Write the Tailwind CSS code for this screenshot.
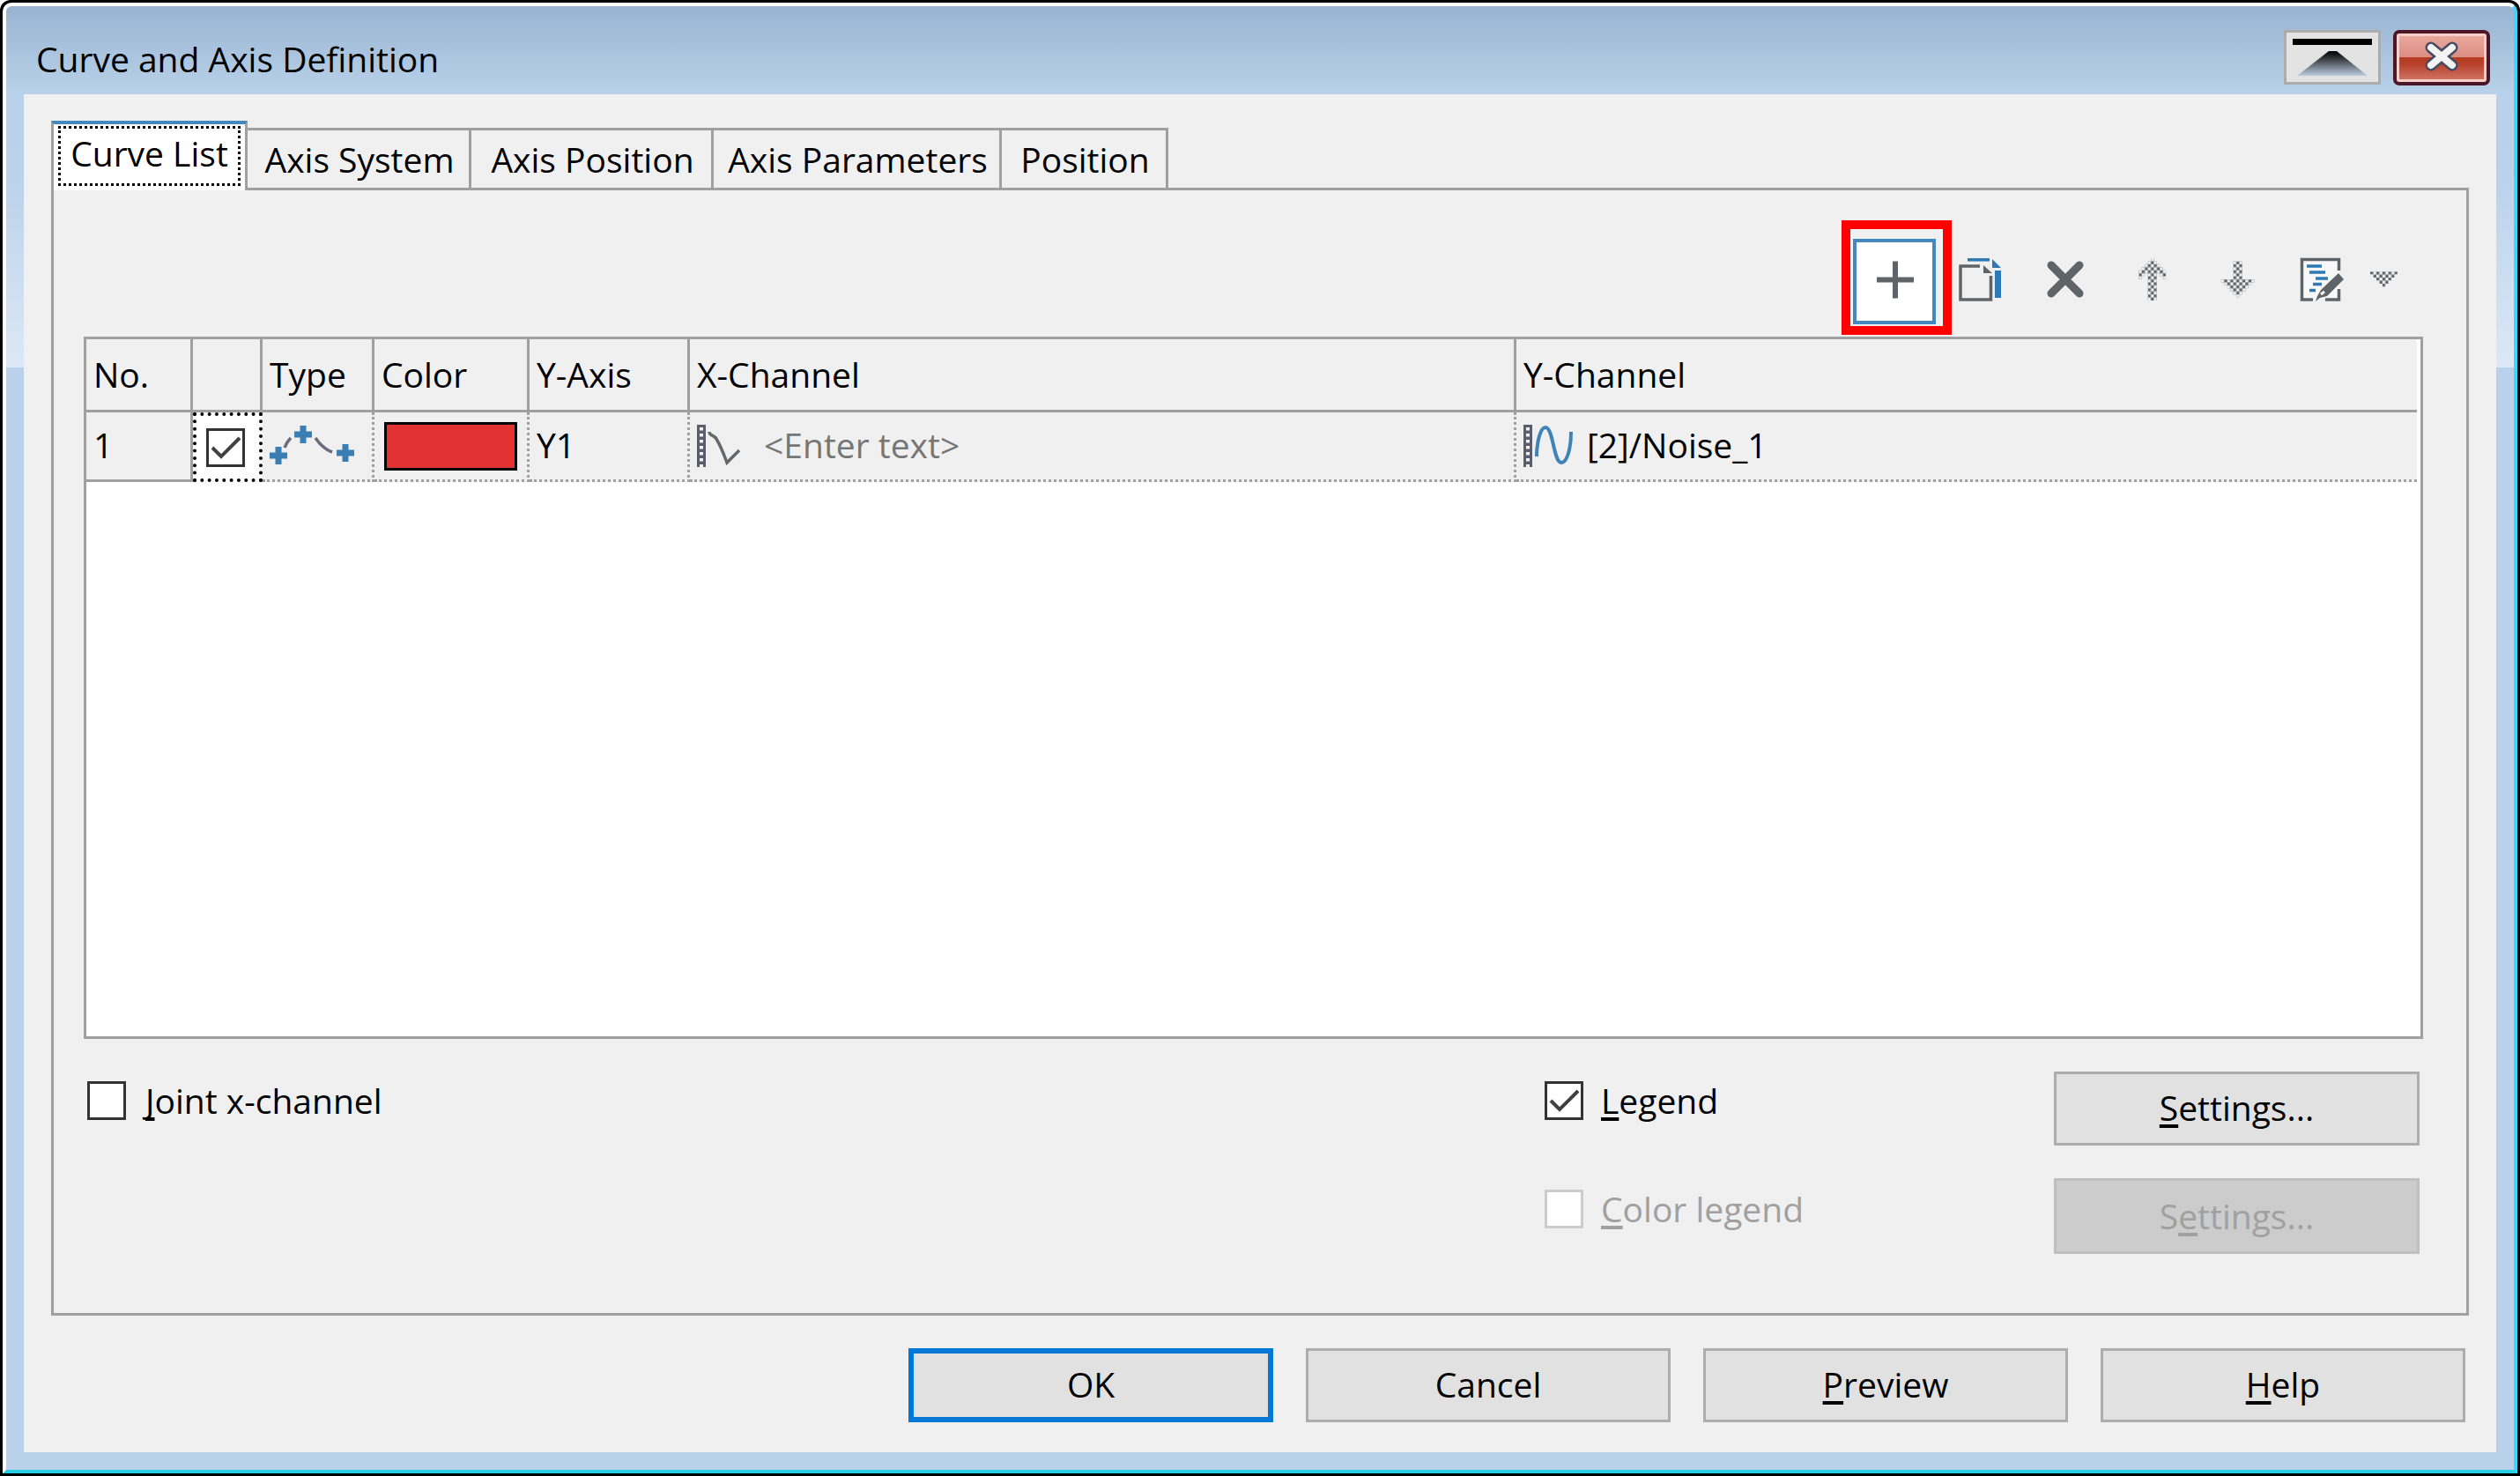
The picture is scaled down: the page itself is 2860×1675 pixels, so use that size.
<!DOCTYPE html>
<html lang="en">
  <head>
    <meta charset="UTF-8" />
    <meta name="viewport" content="width=device-width, initial-scale=1.0" />
    <title>Curve and Axis Definition</title>
    <script src="https://cdn.jsdelivr.net/npm/@tailwindcss/browser@4"></script>
  </head>
  <body class="bg-white font-['Open_Sans','Noto_Sans',sans-serif] text-[39px] leading-[44px] text-black">
    <div class="flex h-screen rounded-t-[12px] bg-black p-[3px]">
      <div class="flex flex-1 flex-col rounded-t-[10px] border-4 border-t-white border-l-white border-r-[#3fd6f8] border-b-[#27cfe3] bg-[linear-gradient(#99b4d1_0px,#b9d1ea_100px,#bbd2eb_200px,#dce8f5_410px,#b9d1ea_410px)] px-5 pb-5">
        <!-- title bar -->
        <header class="flex h-[100px] shrink-0 items-center gap-[14px] pt-[16px] pr-[7px] pl-[14px]">
          <h1 class="flex-1 pt-1">Curve and Axis Definition</h1>
          <button aria-label="Roll up" class="h-[62px] w-[110px] border-[3px] border-[#acacac] bg-[#e3e3e3]">
            <svg viewBox="0 0 104 56" class="h-full w-full">
              <defs>
                <linearGradient id="roll" x1="0" y1="0" x2="0" y2="1">
                  <stop offset="0" stop-color="#000" />
                  <stop offset="0.25" stop-color="#2b2e31" />
                  <stop offset="1" stop-color="#bccde0" />
                </linearGradient>
              </defs>
              <rect x="7" y="7" width="90" height="7" fill="#000" />
              <path d="M48 21H57L92 49H12Z" fill="url(#roll)" />
            </svg>
          </button>
          <button aria-label="Close" class="h-[63px] w-[110px] rounded-[7px] border-4 border-[#4c1626] bg-[#f6cfc8] p-[3px]">
            <span class="flex h-full w-full items-center justify-center bg-[linear-gradient(#eaa79d,#dc8e83_48%,#b63b21_50%,#b8412a_65%,#d07263)]">
              <svg viewBox="0 0 40 34" class="mb-[3px] h-[34px] w-[40px]" fill="none" stroke-linecap="round">
                <path d="M8 7L32 27M32 7L8 27" stroke="#454b60" stroke-width="13" />
                <path d="M8 7L32 27M32 7L8 27" stroke="#f4f4f4" stroke-width="8" />
              </svg>
            </span>
          </button>
        </header>

        <main class="flex flex-1 flex-col bg-[#f0f0f0] px-[31px] pt-[30px] pb-[34px]">
          <!-- tabs -->
          <div role="tablist" class="relative z-10 -mb-[3px] flex h-[79px] items-end">
            <button role="tab" aria-selected="true" class="h-full w-[223px] border-x-[3px] border-t-4 border-x-[#a0a0a0] border-t-[#4389bf] bg-white px-[5px] pt-[2px] pb-[5px]">
              <span class="flex h-full items-center justify-center border-[3px] border-dotted border-black pb-[6px]">Curve List</span>
            </button>
            <button role="tab" class="h-[71px] w-[254px] border-y-[3px] border-r-[3px] border-[#a0a0a0] pl-[3px]">Axis System</button>
            <button role="tab" class="h-[71px] w-[275px] border-y-[3px] border-r-[3px] border-[#a0a0a0] pl-[3px]">Axis Position</button>
            <button role="tab" class="h-[71px] w-[327px] border-y-[3px] border-r-[3px] border-[#a0a0a0] pl-[3px]">Axis Parameters</button>
            <button role="tab" class="h-[71px] w-[189px] border-y-[3px] border-r-[3px] border-[#a0a0a0] pl-[3px]">Position</button>
          </div>

          <section role="tabpanel" class="flex flex-1 flex-col border-[3px] border-[#a0a0a0] pt-[55px] pr-[49px] pb-[67px] pl-[34px]">
            <!-- toolbar -->
            <div role="toolbar" class="mr-[25px] mb-[14px] flex h-[97px] justify-end gap-[3px]">
              <div class="relative">
                <button aria-label="Add curve" class="flex h-full w-[94px] items-center justify-center border-4 border-[#4389bf] bg-white">
                  <svg viewBox="0 0 50 50" class="mb-[6px] size-[50px]">
                    <path d="M5 25.500H47M26 4.500V46.500" stroke="#5f6468" stroke-width="6" />
                  </svg>
                </button>
                <div class="pointer-events-none absolute -top-[21px] -right-[18px] -bottom-[12px] -left-[13px] border-10 border-[#ff0000]"></div>
              </div>
              <button aria-label="Copy" class="flex w-[94px] items-center justify-center pb-[6px]">
                <svg viewBox="0 0 50 50" class="size-[50px]" fill="none" stroke-width="3.500">
                  <path d="M25 10H3V48H37.500V21" stroke="#5f6468" />
                  <path d="M29 9L39 18H29Z" fill="#5f6468" />
                  <path d="M11 2.800H36" stroke="#2c79b5" />
                  <path d="M39 2L49 12H39Z" fill="#2c79b5" />
                  <path d="M45.500 15V46" stroke="#2c79b5" stroke-width="7" />
                </svg>
              </button>
              <button aria-label="Delete" class="flex w-[94px] items-center justify-center pb-[6px]">
                <svg viewBox="0 0 50 50" class="size-[50px]">
                  <path d="M9 9L41 41M41 9L9 41" stroke="#5f6468" stroke-width="9" stroke-linecap="round" />
                </svg>
              </button>
              <button aria-label="Move up" class="flex w-[94px] items-center justify-center pb-[6px]">
                <svg viewBox="0 0 14 14" class="size-[48px]">
                  <defs>
                    <pattern id="hatch" width="2" height="2" patternUnits="userSpaceOnUse">
                      <rect width="1" height="1" fill="#5f6468" />
                      <rect x="1" y="1" width="1" height="1" fill="#5f6468" />
                    </pattern>
                  </defs>
                  <path d="M7 0H8V1H9V2H10V3H11V4H12V7H11V6H10V5H9V14H6V5H5V6H4V7H3V4H4V3H5V2H6V1H7Z" fill="url(#hatch)" />
                </svg>
              </button>
              <button aria-label="Move down" class="flex w-[94px] items-center justify-center pb-[6px]">
                <svg viewBox="0 0 14 14" class="size-[48px]">
                  <path d="M6 1H9V7H13V8H12V9H11V10H10V11H9V12H8V13H7V12H6V11H5V10H4V9H3V8H2V7H6Z" fill="url(#hatch)" />
                </svg>
              </button>
              <button aria-label="Edit" class="flex w-[94px] items-center justify-center pb-[6px]">
                <svg viewBox="0 0 50 50" class="size-[50px]" fill="none">
                  <path d="M3 3H45V47H3Z" fill="#f8f8f8" />
                  <path d="M15 48H2.500V2.500H44.500V15M44.500 36V48H29" stroke="#5f6468" stroke-width="3.500" />
                  <path d="M8 10H25M11 17H29M18 24H32M15 30.500H25M11 37.500H18" stroke="#2c79b5" stroke-width="3.500" />
                  <path d="M44 18L50 25L31 44L23 46L18 50L20 44L24 37Z" fill="#5f6468" />
                  <path d="M24 42L28 39" stroke="#f8f8f8" stroke-width="3" />
                </svg>
              </button>
              <button aria-label="More" class="flex w-[40px] items-center justify-center pb-[2px]">
                <svg viewBox="0 0 9 6" class="h-[21px] w-[31px]">
                  <path d="M0 0H9V1H8V2H7V3H6V4H5V5H4V4H3V3H2V2H1V1H0Z" fill="url(#hatch)" />
                </svg>
              </button>
            </div>

            <!-- curve list -->
            <div class="flex-1 border-[3px] border-[#a0a0a0] bg-white pr-1">
              <table class="w-full table-fixed border-separate border-spacing-0 bg-[#f0f0f0] text-left">
                <thead>
                  <tr class="h-[83px]">
                    <th class="w-[121px] border-r-[3px] border-b-[3px] border-[#a0a0a0] pl-[8px] font-normal">No.</th>
                    <th class="w-[79px] border-r-[3px] border-b-[3px] border-[#a0a0a0]"></th>
                    <th class="w-[127px] border-r-[3px] border-b-[3px] border-[#a0a0a0] pl-[8px] font-normal">Type</th>
                    <th class="w-[176px] border-r-[3px] border-b-[3px] border-[#a0a0a0] pl-[8px] font-normal">Color</th>
                    <th class="w-[182px] border-r-[3px] border-b-[3px] border-[#a0a0a0] pl-[8px] font-normal">Y-Axis</th>
                    <th class="w-[938px] border-r-[3px] border-b-[3px] border-[#a0a0a0] pl-[8px] font-normal">X-Channel</th>
                    <th class="border-b-[3px] border-[#a0a0a0] pl-[8px] font-normal">Y-Channel</th>
                  </tr>
                </thead>
                <tbody>
                  <tr class="h-[79px]">
                    <td class="border-r-[3px] border-b-[3px] border-[#a0a0a0] pb-[2px] pl-[8px]">1</td>
                    <td class="border-4 border-dotted border-black bg-white">
                      <div class="relative ml-[11px] size-[44px]">
                        <input type="checkbox" checked aria-label="Show curve 1" class="peer block size-full appearance-none border-[3px] border-[#333333] bg-white" />
                        <svg viewBox="0 0 44 44" class="pointer-events-none absolute inset-0 hidden peer-checked:block" fill="none">
                          <path d="M7 22L17 32L38 11" stroke="#404040" stroke-width="4" />
                        </svg>
                      </div>
                    </td>
                    <td class="border-r-[3px] border-b-[3px] border-dotted border-[#a0a0a0] pl-[8px]">
                      <svg viewBox="0 0 98 48" class="h-[48px] w-[98px]" fill="none">
                        <path d="M17 26Q19 20 24 15M52 15Q60 27 71 31" stroke="#6b6b7d" stroke-width="3.500" />
                        <path d="M0 35H20M10 25V45M28 11H48M38 1V21M76 32H96M86 22V42" stroke="#3a7eb3" stroke-width="7" />
                      </svg>
                    </td>
                    <td class="border-r-[3px] border-b-[3px] border-dotted border-[#a0a0a0] px-[11px]">
                      <button aria-label="Curve color" class="block h-[55px] w-full border-[3px] border-black bg-[#e23232]"></button>
                    </td>
                    <td class="border-r-[3px] border-b-[3px] border-dotted border-[#a0a0a0] pb-[2px] pl-[8px]">Y1</td>
                    <td class="border-r-[3px] border-b-[3px] border-dotted border-[#a0a0a0] pl-[8px]">
                      <div class="flex items-center gap-[20px]">
                        <svg viewBox="0 0 56 48" class="h-[48px] w-[56px] shrink-0" fill="none">
                          <path d="M0 0H10V48H0Z" fill="#5c5c6c" />
                          <path d="M5 3V48" stroke="#f0f0f0" stroke-width="4" stroke-dasharray="3.500 3.500" />
                          <path d="M14 8C14 13 19 11 22 16C28 26 31 35 34 43L48 29" stroke="#63686d" stroke-width="3.500" />
                        </svg>
                        <input type="text" aria-label="X-Channel" placeholder="&lt;Enter text&gt;" class="min-w-0 flex-1 bg-transparent pb-[2px] placeholder:text-[#767676]" />
                      </div>
                    </td>
                    <td class="border-b-[3px] border-dotted border-[#a0a0a0] pl-[8px]">
                      <div class="flex items-center gap-[16px]">
                        <svg viewBox="0 0 56 48" class="h-[48px] w-[56px] shrink-0" fill="none">
                          <path d="M0 0H10V48H0Z" fill="#5c5c6c" />
                          <path d="M5 3V48" stroke="#f0f0f0" stroke-width="4" stroke-dasharray="3.500 3.500" />
                          <path d="M15 36C15 17 20 3 25 3C34 3 34 43 43 43C49 43 54 28 54 8" stroke="#3f84b8" stroke-width="4" />
                        </svg>
                        <input type="text" aria-label="Y-Channel" value="[2]/Noise_1" class="min-w-0 flex-1 bg-transparent pb-[2px]" />
                      </div>
                    </td>
                  </tr>
                </tbody>
              </table>
            </div>

            <!-- options -->
            <div class="mt-[37px] ml-1 mr-1 grid grid-cols-[1fr_578px_415px] items-start gap-y-[37px]">
              <label class="mt-[11px] flex items-center gap-[22px]">
                <input type="checkbox" class="size-[44px] appearance-none border-[3px] border-[#333333] bg-white" />
                <span><span class="underline decoration-4 underline-offset-4 [text-decoration-skip-ink:none]">J</span>oint x-channel</span>
              </label>
              <label class="mt-[11px] flex items-center gap-[20px]">
                <span class="relative size-[44px]">
                  <input type="checkbox" checked class="peer block size-full appearance-none border-[3px] border-[#333333] bg-white" />
                  <svg viewBox="0 0 44 44" class="pointer-events-none absolute inset-0 hidden peer-checked:block" fill="none">
                    <path d="M7 22L17 32L38 11" stroke="#404040" stroke-width="4" />
                  </svg>
                </span>
                <span><span class="underline decoration-4 underline-offset-4 [text-decoration-skip-ink:none]">L</span>egend</span>
              </label>
              <button class="h-[84px] border-[3px] border-[#adadad] bg-[#e1e1e1] pb-[2px]"><span class="underline decoration-4 underline-offset-4 [text-decoration-skip-ink:none]">S</span>ettings...</button>
              <label class="col-start-2 mt-[13px] flex items-center gap-[20px] text-[#a0a0a0]">
                <input type="checkbox" disabled class="size-[44px] appearance-none border-[3px] border-[#cccccc] bg-white" />
                <span><span class="underline decoration-4 underline-offset-4 [text-decoration-skip-ink:none]">C</span>olor legend</span>
              </label>
              <button disabled class="h-[86px] border-[3px] border-[#bfbfbf] bg-[#cccccc] text-[#a0a0a0]">S<span class="underline decoration-4 underline-offset-4 [text-decoration-skip-ink:none]">e</span>ttings...</button>
            </div>
          </section>

          <!-- dialog buttons -->
          <footer class="mt-[37px] mr-1 flex justify-end gap-[37px]">
            <button class="h-[84px] w-[414px] border-[6px] border-[#0078d7] bg-[#e1e1e1] pb-[2px]">OK</button>
            <button class="h-[84px] w-[414px] border-[3px] border-[#adadad] bg-[#e1e1e1] pb-[2px]">Cancel</button>
            <button class="h-[84px] w-[414px] border-[3px] border-[#adadad] bg-[#e1e1e1] pb-[2px]"><span class="underline decoration-4 underline-offset-4 [text-decoration-skip-ink:none]">P</span>review</button>
            <button class="h-[84px] w-[414px] border-[3px] border-[#adadad] bg-[#e1e1e1] pb-[2px]"><span class="underline decoration-4 underline-offset-4 [text-decoration-skip-ink:none]">H</span>elp</button>
          </footer>
        </main>
      </div>
    </div>
  </body>
</html>
